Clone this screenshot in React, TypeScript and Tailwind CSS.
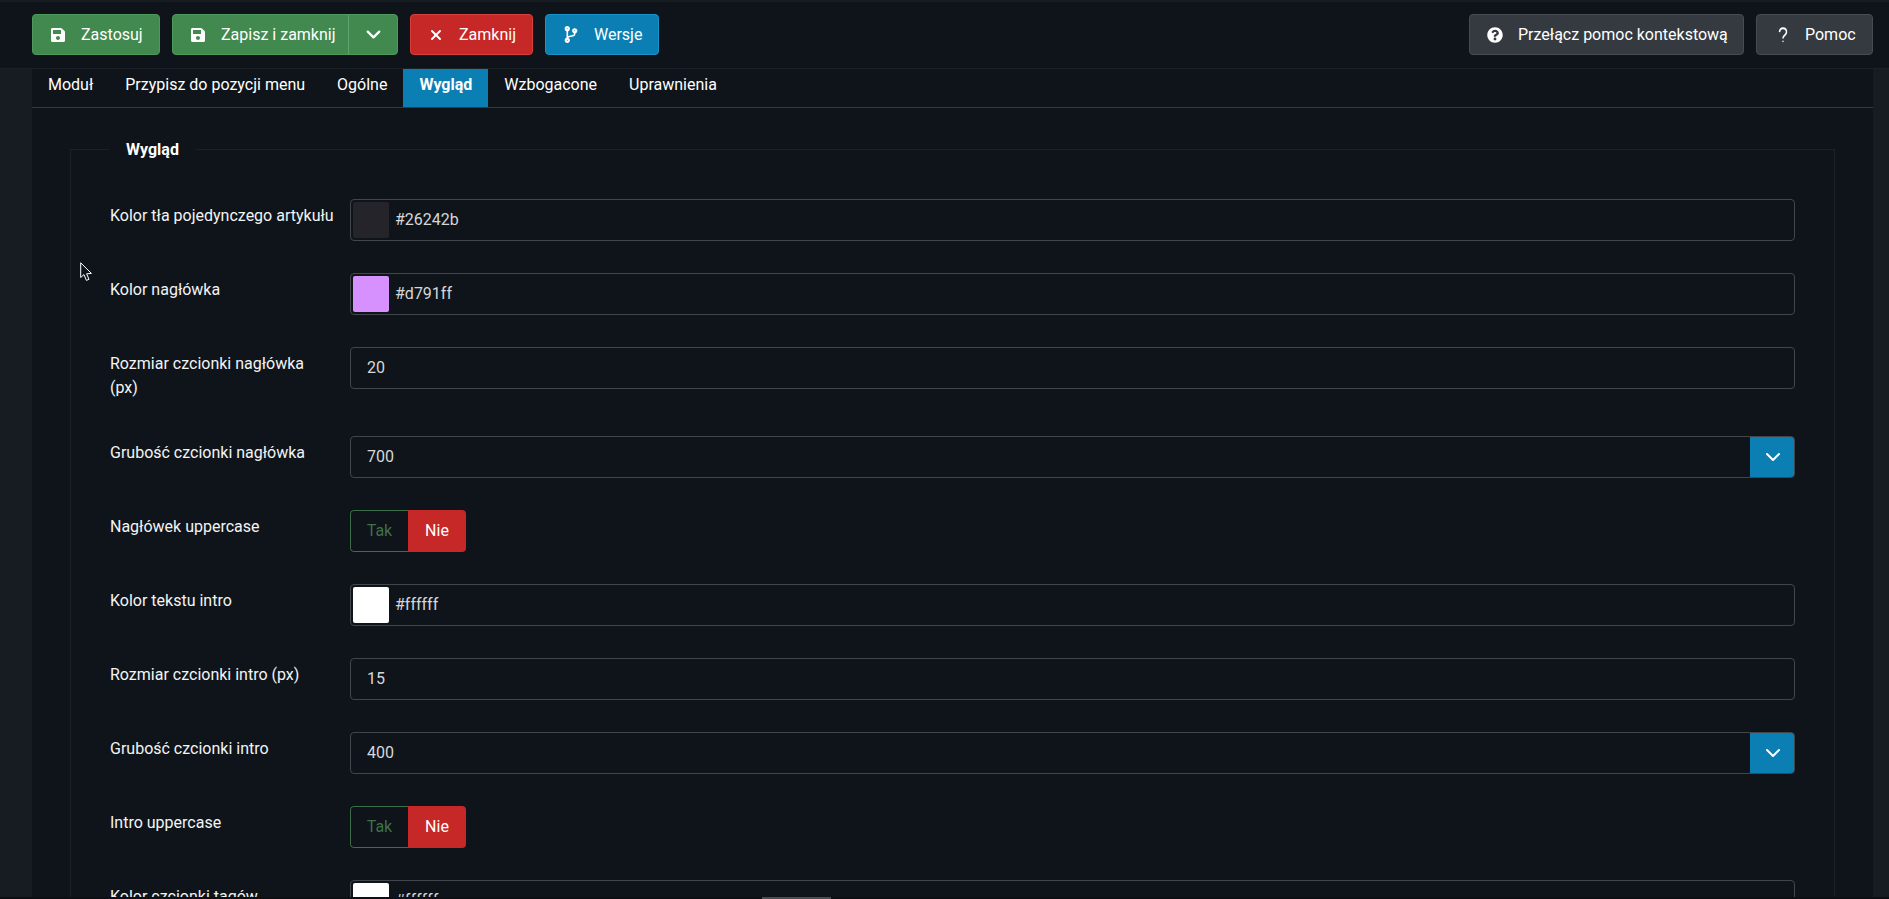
import { ChevronDown, X } from "lucide-react";
import type { ReactNode } from "react";

const Save = () => (
  <svg viewBox="0 0 448 512" className="w-[14px] h-[16px]" fill="currentColor">
    <path d="M433.9 129.9l-83.9-83.9A48 48 0 0 0 316.1 32H48C21.5 32 0 53.5 0 80v352c0 26.5 21.5 48 48 48h352c26.5 0 48-21.5 48-48V163.9a48 48 0 0 0-14.1-34zM224 416c-35.3 0-64-28.7-64-64 0-35.3 28.7-64 64-64s64 28.7 64 64c0 35.3-28.7 64-64 64zm96-304.5V212c0 6.6-5.4 12-12 12H76c-6.6 0-12-5.4-12-12V108c0-6.6 5.4-12 12-12h228.5c3.2 0 6.2 1.3 8.5 3.5l3.5 3.5c2.3 2.3 3.5 5.3 3.5 8.5z" />
  </svg>
);

const QuestionCircle = () => (
  <svg viewBox="0 0 512 512" className="w-4 h-4" fill="currentColor">
    <path d="M504 256c0 137-111 248-248 248S8 393 8 256C8 119 119 8 256 8s248 111 248 248zM262.7 90c-54.5 0-89.3 23-116.5 63.8-3.5 5.3-2.4 12.4 2.7 16.3l34.7 26.3c5.2 3.9 12.6 3 16.7-2.1 17.9-22.7 30.1-35.8 57.3-35.8 20.4 0 45.7 13.1 45.7 33 0 15-12.4 22.7-32.6 34-23.6 13.2-54.8 29.7-54.8 70.9V302c0 6.6 5.4 12 12 12h56c6.6 0 12-5.4 12-12v-1.3c0-28.6 83.5-29.8 83.5-107.2C379.4 135.3 319 90 262.7 90zM256 339c-25.5 0-46.200 20.700-46.200 46.200s20.700 46.200 46.200 46.200 46.200-20.700 46.200-46.200S281.500 339 256 339z" />
  </svg>
);

const Question = () => (
  <svg viewBox="0 0 24 24" className="h-[18px] w-[14px] ml-[1px]" fill="none" stroke="currentColor" strokeWidth="2.6" preserveAspectRatio="none">
    <path d="M6 8.200C6.300 4.800 8.700 3 12 3c3.500 0 6 2 6 5 0 2.300-1.300 3.400-3.200 4.500C12.900 13.600 12 14.500 12 16.600" />
    <circle cx="12" cy="20.500" r="1.100" fill="currentColor" stroke="none" />
  </svg>
);

const CodeBranch = () => (
  <svg viewBox="0 0 384 512" className="h-[17px] w-[14px]" fill="currentColor">
    <path d="M384 144c0-44.200-35.800-80-80-80s-80 35.800-80 80c0 36.400 24.300 67.100 57.500 76.800-.6 16.100-4.200 28.500-11 36.900-15.400 19.200-49.300 22.400-85.200 25.700-28.200 2.600-57.400 5.400-81.300 16.900v-144c32.500-10.200 56-40.500 56-76.300 0-44.200-35.800-80-80-80S0 35.800 0 80c0 35.800 23.500 66.100 56 76.300v199.300C23.500 365.900 0 396.200 0 432c0 44.200 35.800 80 80 80s80-35.800 80-80c0-34-21.200-63.100-51.200-74.600 3.100-5.200 7.800-9.800 14.900-13.400 16.200-8.200 40.400-10.400 66.100-12.800 42.200-3.900 90-8.400 118.200-43.400 14-17.400 21.100-39.800 21.600-67.900 31.600-10.800 54.400-40.700 54.400-75.900zM80 64c8.800 0 16 7.200 16 16s-7.200 16-16 16-16-7.200-16-16 7.200-16 16-16zm0 384c-8.800 0-16-7.200-16-16s7.200-16 16-16 16 7.200 16 16-7.200 16-16 16zm224-320c8.800 0 16 7.200 16 16s-7.200 16-16 16-16-7.200-16-16 7.200-16 16-16z" />
  </svg>
);

const Btn = ({ cls, icon, label, w }: { cls: string; icon: ReactNode; label: string; w: string }) => (
  <button className={`h-[41px] ${w} ${cls} rounded-[4px] border flex items-center text-[16px] text-white shrink-0`}>
    <span className="w-[48px] flex justify-center shrink-0 pl-[2px]">{icon}</span>
    <span>{label}</span>
  </button>
);

const Label = ({ children }: { children: ReactNode }) => (
  <label className="w-[240px] shrink-0 pt-[5px] pb-[4px] leading-[24px] text-[16px] text-[#f2f4f5]">{children}</label>
);

const Row = ({ label, children }: { label: ReactNode; children: ReactNode }) => (
  <div className="flex items-start mb-[32px]">
    <Label>{label}</Label>
    {children}
  </div>
);

const boxCls = "flex-1 h-[42px] border border-[#41464d] rounded-[4px] bg-[#0f141a] flex items-center";

const ColorRow = ({ label, color }: { label: string; color: string }) => (
  <Row label={label}>
    <div className={boxCls}>
      <span className="w-[36px] h-[36px] ml-[2px] rounded-[2px]" style={{ backgroundColor: color }} />
      <span className="ml-[6px] text-[#d5d7d9]">{color}</span>
    </div>
  </Row>
);

const TextRow = ({ label, value }: { label: ReactNode; value: string }) => (
  <Row label={label}>
    <div className={`${boxCls} pl-[16px] text-[#d5d7d9]`}>{value}</div>
  </Row>
);

const SelectRow = ({ label, value }: { label: string; value: string }) => (
  <Row label={label}>
    <div className={`${boxCls} pl-[16px] text-[#d5d7d9] relative overflow-hidden`}>
      <span className="flex-1">{value}</span>
      <span className="w-[45px] h-[42px] bg-[#0b7fb3] flex items-center justify-center text-white -mr-px">
        <ChevronDown size={24} strokeWidth={2} />
      </span>
    </div>
  </Row>
);

const SwitchRow = ({ label }: { label: string }) => (
  <Row label={label}>
    <div className="flex h-[42px] w-[116px] rounded-[4px] overflow-hidden">
      <span className="w-[58px] border border-r-0 border-[#3c6f47] rounded-l-[4px] text-[#3f7049] flex items-center justify-center">Tak</span>
      <span className="w-[58px] bg-[#c52827] text-white flex items-center justify-center">Nie</span>
    </div>
  </Row>
);

const tabs = ["Moduł", "Przypisz do pozycji menu", "Ogólne", "Wygląd", "Wzbogacone", "Uprawnienia"];

export default function App() {
  return (
    <div className="h-[899px] overflow-hidden relative bg-[#171c23] text-white font-['Roboto',sans-serif] text-[16px]">
      <div className="h-[69px] bg-[#0f141a] border-t-2 border-t-[#171c23] border-b border-b-[#1c2128] flex items-center pl-[32px] pr-[16px] pb-[1px] gap-[12px]">
        <Btn w="w-[128px]" cls="bg-[#41894f] border-[#4d9a5c]" icon={<Save />} label="Zastosuj" />
        <div className="h-[41px] w-[226px] flex rounded-[4px] bg-[#41894f] border border-[#4d9a5c] shrink-0">
          <span className="w-[175px] flex items-center">
            <span className="w-[48px] flex justify-center shrink-0 pl-[2px]"><Save /></span>
            <span>Zapisz i zamknij</span>
          </span>
          <span className="flex-1 border-l border-[#5fa26d] flex items-center justify-center">
            <ChevronDown size={23} strokeWidth={2.4} />
          </span>
        </div>
        <Btn w="w-[123px]" cls="bg-[#c52827] border-[#d6413f]" icon={<X size={16} strokeWidth={3} />} label="Zamknij" />
        <Btn w="w-[114px]" cls="bg-[#0b7fb3] border-[#1a93c9]" icon={<CodeBranch />} label="Wersje" />
        <div className="flex-1" />
        <Btn w="w-[275px]" cls="bg-[#353a41] border-[#474c53]" icon={<QuestionCircle />} label="Przełącz pomoc kontekstową" />
        <Btn w="w-[117px]" cls="bg-[#353a41] border-[#474c53]" icon={<Question />} label="Pomoc" />
      </div>

      <div className="mx-[16px] ml-[32px] bg-[#0f141a] h-[830px]">
        <div className="flex h-[39px] border-b border-[#353a41]">
          {tabs.map((t) => (
            <div
              key={t}
              className={`px-[16px] h-[38px] pb-[6px] flex items-center ${t === "Wygląd" ? "bg-[#0b7fb3] font-bold" : ""}`}
            >
              {t}
            </div>
          ))}
        </div>

        <div className="mt-[41px] ml-[38px] mr-[38px] border border-[#1c2128] h-[800px] relative pt-[49px] pl-[39px] pr-[39px]">
          <span className="absolute -top-[12px] left-[38px] px-[17px] bg-[#0f141a] font-bold leading-[24px]">Wygląd</span>
          <ColorRow label="Kolor tła pojedynczego artykułu" color="#26242b" />
          <ColorRow label="Kolor nagłówka" color="#d791ff" />
          <TextRow label={<>Rozmiar czcionki nagłówka<br />(px)</>} value="20" />
          <SelectRow label="Grubość czcionki nagłówka" value="700" />
          <SwitchRow label="Nagłówek uppercase" />
          <ColorRow label="Kolor tekstu intro" color="#ffffff" />
          <TextRow label="Rozmiar czcionki intro (px)" value="15" />
          <SelectRow label="Grubość czcionki intro" value="400" />
          <SwitchRow label="Intro uppercase" />
          <ColorRow label="Kolor czcionki tagów" color="#ffffff" />
        </div>
      </div>

      <svg viewBox="0 0 13 20" className="absolute left-[80px] top-[262px] w-[13px] h-[20px]">
        <path d="M0.7 0.8 L0.7 15.5 L4 12.6 L6.4 18.4 L9 17.3 L6.6 11.8 L11.4 11.4 Z" fill="#0f141a" stroke="#ffffff" strokeWidth="1" />
      </svg>
      <div className="absolute left-0 right-0 bottom-0 h-[2px] bg-[#0c1015]" />
      <div className="absolute left-[762px] bottom-0 w-[69px] h-[2px] bg-[#4a4d52]" />
    </div>
  );
}
